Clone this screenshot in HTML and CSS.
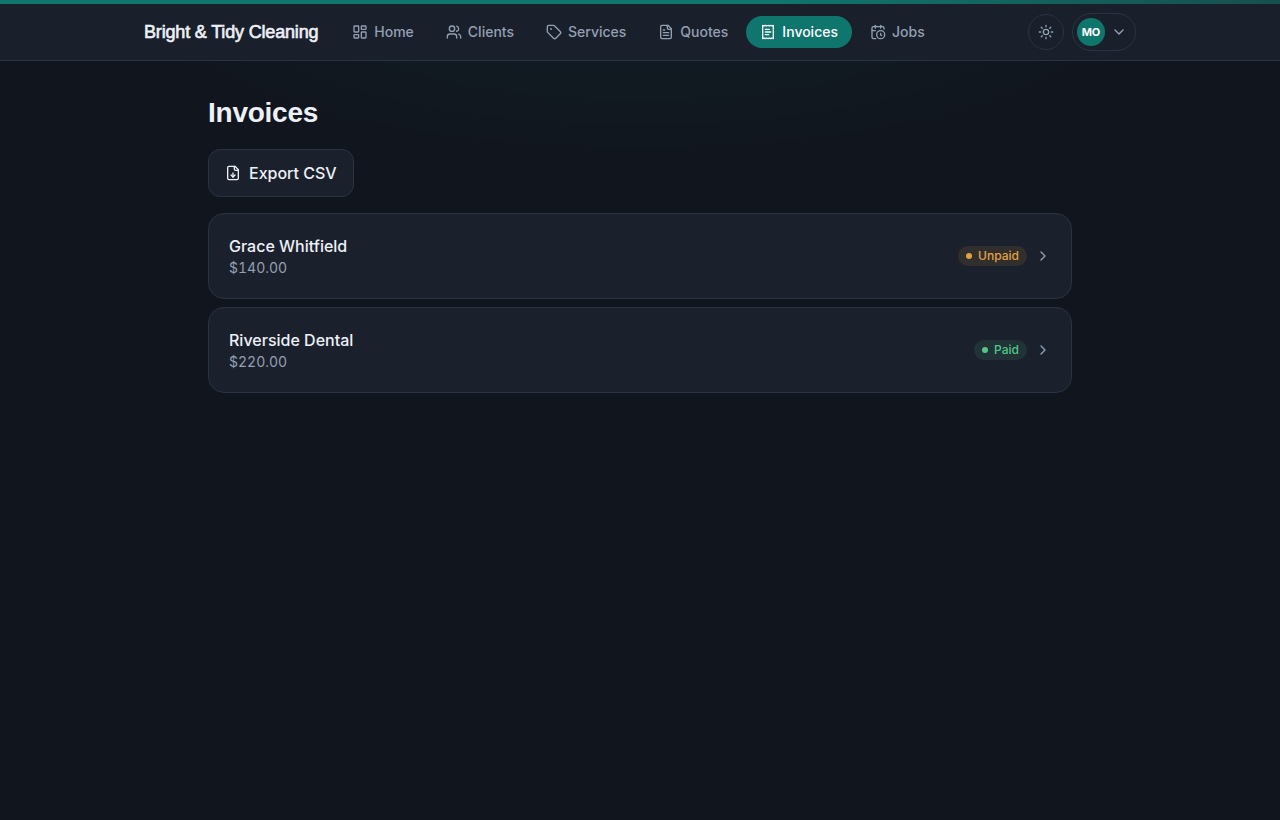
FILE: index.html
```html
<!DOCTYPE html>
<html lang="en">
  <head>
    <meta charset="UTF-8" />
    <title>Invoices - Bright &amp; Tidy Cleaning</title>
    <link rel="stylesheet" href="styles.css" />
  </head>
  <body>
    <header class="site-header">
      <div class="header-inner">
        <a class="brand" href="#">Bright &amp; Tidy Cleaning</a>
        <nav class="nav">
          <a class="nav-link" href="#">
            <svg class="icon" viewBox="0 0 24 24">
              <rect width="7" height="9" x="3" y="3" rx="1" />
              <rect width="7" height="5" x="14" y="3" rx="1" />
              <rect width="7" height="9" x="14" y="12" rx="1" />
              <rect width="7" height="5" x="3" y="16" rx="1" />
            </svg>
            Home
          </a>
          <a class="nav-link" href="#">
            <svg class="icon" viewBox="0 0 24 24">
              <path d="M16 21v-2a4 4 0 0 0-4-4H6a4 4 0 0 0-4 4v2" />
              <circle cx="9" cy="7" r="4" />
              <path d="M22 21v-2a4 4 0 0 0-3-3.87" />
              <path d="M16 3.13a4 4 0 0 1 0 7.75" />
            </svg>
            Clients
          </a>
          <a class="nav-link" href="#">
            <svg class="icon" viewBox="0 0 24 24">
              <path d="M12.586 2.586A2 2 0 0 0 11.172 2H4a2 2 0 0 0-2 2v7.172a2 2 0 0 0 .586 1.414l8.704 8.704a2.426 2.426 0 0 0 3.42 0l6.58-6.58a2.426 2.426 0 0 0 0-3.42z" />
              <circle cx="7.5" cy="7.5" r=".5" fill="currentColor" />
            </svg>
            Services
          </a>
          <a class="nav-link" href="#">
            <svg class="icon" viewBox="0 0 24 24">
              <path d="M15 2H6a2 2 0 0 0-2 2v16a2 2 0 0 0 2 2h12a2 2 0 0 0 2-2V7Z" />
              <path d="M14 2v4a2 2 0 0 0 2 2h4" />
              <path d="M10 9H8" />
              <path d="M16 13H8" />
              <path d="M16 17H8" />
            </svg>
            Quotes
          </a>
          <a class="nav-link active" href="#">
            <svg class="icon" viewBox="0 0 24 24">
              <path d="M4 2v20l2-1 2 1 2-1 2 1 2-1 2 1 2-1 2 1V2l-2 1-2-1-2 1-2-1-2 1-2-1-2 1Z" />
              <path d="M14 8H8" />
              <path d="M16 12H8" />
              <path d="M13 16H8" />
            </svg>
            Invoices
          </a>
          <a class="nav-link" href="#">
            <svg class="icon" viewBox="0 0 24 24">
              <path d="M21 7.5V6a2 2 0 0 0-2-2H5a2 2 0 0 0-2 2v14a2 2 0 0 0 2 2h3.5" />
              <path d="M16 2v4" />
              <path d="M8 2v4" />
              <path d="M3 10h5" />
              <path d="M17.5 17.5 16 16.3V14" />
              <circle cx="16" cy="16" r="6" />
            </svg>
            Jobs
          </a>
        </nav>
        <div class="header-actions">
          <button class="theme-toggle" aria-label="Toggle theme">
            <svg class="icon" viewBox="0 0 24 24">
              <circle cx="12" cy="12" r="4" />
              <path d="M12 2v2M12 20v2M4.93 4.93l1.41 1.41M17.66 17.66l1.41 1.41M2 12h2M20 12h2M6.34 17.66l-1.41 1.41M19.07 4.93l-1.41 1.41" />
            </svg>
          </button>
          <button class="user-menu" aria-label="Account">
            <span class="avatar">MO</span>
            <svg class="icon" viewBox="0 0 24 24"><path d="m6 9 6 6 6-6" /></svg>
          </button>
        </div>
      </div>
    </header>

    <main class="container">
      <h1>Invoices</h1>
      <a class="export-btn" href="#">
        <svg class="icon" viewBox="0 0 24 24">
          <path d="M15 2H6a2 2 0 0 0-2 2v16a2 2 0 0 0 2 2h12a2 2 0 0 0 2-2V7Z" />
          <path d="M14 2v4a2 2 0 0 0 2 2h4" />
          <path d="M12 18v-6" />
          <path d="m9 15 3 3 3-3" />
        </svg>
        Export CSV
      </a>

      <div class="invoice-list">
        <a class="invoice" href="#">
          <div>
            <div class="client">Grace Whitfield</div>
            <div class="amount">$140.00</div>
          </div>
          <div class="invoice-side">
            <span class="badge unpaid">Unpaid</span>
            <svg class="icon" viewBox="0 0 24 24"><path d="m9 18 6-6-6-6" /></svg>
          </div>
        </a>
        <a class="invoice" href="#">
          <div>
            <div class="client">Riverside Dental</div>
            <div class="amount">$220.00</div>
          </div>
          <div class="invoice-side">
            <span class="badge paid">Paid</span>
            <svg class="icon" viewBox="0 0 24 24"><path d="m9 18 6-6-6-6" /></svg>
          </div>
        </a>
      </div>
    </main>
  </body>
</html>
```

FILE: styles.css
```css
* {
  box-sizing: border-box;
}

body {
  margin: 0;
  min-height: 100vh;
  font-family: Inter, sans-serif;
  font-size: 16px;
  line-height: 24px;
  color: #edf1f7;
  background: radial-gradient(
      ellipse 580px 180px at 50% 0,
      rgba(17, 110, 115, 0.09),
      transparent
    )
    no-repeat #11151d;
}

a {
  color: inherit;
  text-decoration: none;
}

button {
  font: inherit;
  background: none;
  padding: 0;
  cursor: pointer;
}

.icon {
  width: 16px;
  height: 16px;
  flex-shrink: 0;
  fill: none;
  stroke: currentColor;
  stroke-width: 2;
  stroke-linecap: round;
  stroke-linejoin: round;
}

/* Header */
.site-header {
  background: #1a202b;
  border-bottom: 1px solid #2a3342;
}

.site-header::before {
  content: "";
  display: block;
  height: 4px;
  background: linear-gradient(90deg, #0f766e 60%, #174f4e);
}

.header-inner {
  display: flex;
  align-items: center;
  width: 992px;
  height: 56px;
  margin: 0 auto;
}

.brand {
  width: 174.3px;
  margin-right: 20px;
  font-family: "Liberation Sans", sans-serif;
  font-size: 18px;
  font-weight: 400;
  letter-spacing: -0.17px;
  -webkit-text-stroke: 0.6px currentColor;
  white-space: nowrap;
}

.nav {
  display: flex;
  gap: 4px;
}

.nav-link {
  display: flex;
  align-items: center;
  gap: 6px;
  height: 32px;
  padding: 0 14px;
  border-radius: 16px;
  font-size: 14px;
  font-weight: 500;
  color: #949fb2;
}

.nav-link.active {
  background: #0f766e;
  color: #fff;
}

.header-actions {
  display: flex;
  align-items: center;
  gap: 8px;
  margin-left: auto;
}

.theme-toggle,
.user-menu {
  display: flex;
  align-items: center;
  border: 1px solid #2a3342;
  color: #949fb2;
}

.theme-toggle {
  justify-content: center;
  width: 36px;
  height: 36px;
  border-radius: 50%;
}

.user-menu {
  gap: 6px;
  height: 38px;
  padding: 0 8px 0 4px;
  border-radius: 19px;
}

.avatar {
  width: 28px;
  height: 28px;
  border-radius: 50%;
  background: #0f766e;
  color: #fff;
  font-size: 11px;
  font-weight: 700;
  line-height: 28px;
  text-align: center;
}

/* Page */
.container {
  width: 864px;
  margin: 0 auto;
  padding-top: 34px;
}

h1 {
  margin: 0 0 18px;
  font-family: "Liberation Sans", sans-serif;
  font-size: 28px;
  font-weight: 700;
  line-height: 36px;
  letter-spacing: -0.25px;
}

.export-btn {
  display: inline-flex;
  align-items: center;
  gap: 8px;
  height: 48px;
  padding: 0 16px;
  border: 1px solid #2a3342;
  border-radius: 12px;
  background: #1b212c;
  font-weight: 500;
  vertical-align: top;
}

.invoice-list {
  display: grid;
  gap: 8px;
  margin-top: 16px;
}

.invoice {
  display: flex;
  align-items: center;
  justify-content: space-between;
  height: 86px;
  padding: 0 20px;
  border: 1px solid #2a3342;
  border-radius: 16px;
  background: #1b212c;
}

.client {
  font-weight: 500;
}

.amount {
  font-size: 14px;
  line-height: 20px;
  font-variant-numeric: tabular-nums;
  color: #949fb2;
}

.invoice-side {
  display: flex;
  align-items: center;
  gap: 8px;
  color: #949fb2;
}

.badge {
  display: flex;
  align-items: center;
  gap: 6px;
  height: 20px;
  padding: 0 8px;
  border-radius: 10px;
  font-size: 12px;
  font-weight: 500;
}

.badge::before {
  content: "";
  width: 6px;
  height: 6px;
  border-radius: 50%;
  background: currentColor;
}

.badge.unpaid {
  color: #e0a33e;
  background: rgba(224, 163, 62, 0.11);
}

.badge.paid {
  color: #4fc98a;
  background: rgba(79, 201, 138, 0.11);
}
```
